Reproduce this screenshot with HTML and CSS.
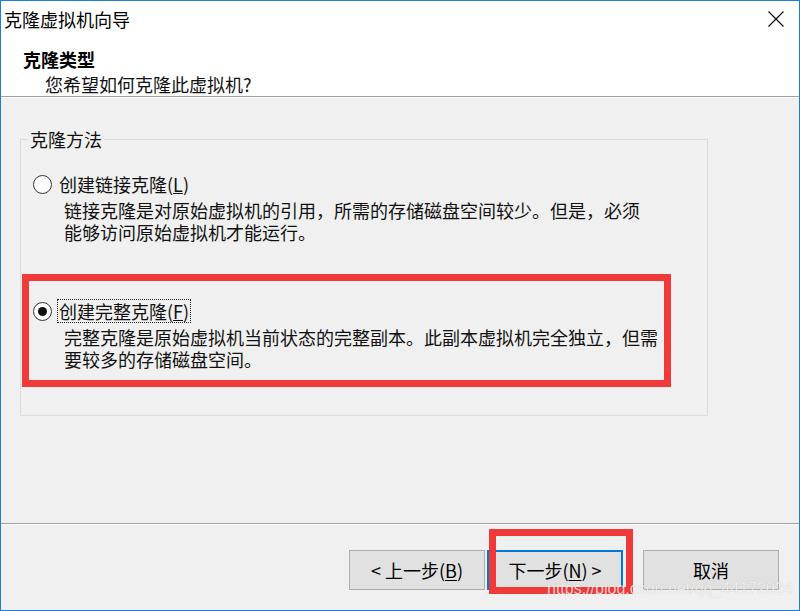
FILE: index.html
```html
<!DOCTYPE html>
<html lang="zh-CN">
<head>
  <meta charset="UTF-8">
  <title>克隆虚拟机向导</title>
  <link rel="stylesheet" href="styles.css">
</head>
<body>
  <div class="window">
    <div class="titlebar">
      <span class="title">克隆虚拟机向导</span>
      <svg class="close" width="16" height="16" viewBox="0 0 16 16">
        <path d="M0.5 0.5 L15.5 15.5 M15.5 0.5 L0.5 15.5" stroke="#000" stroke-width="1.1" fill="none"/>
      </svg>
    </div>

    <div class="header">
      <div class="header-title">克隆类型</div>
      <div class="header-sub">您希望如何克隆此虚拟机?</div>
    </div>

    <div class="content">
      <fieldset class="group">
        <legend>克隆方法</legend>

        <div class="option">
          <span class="radio"></span>
          <span class="label">创建链接克隆(<u>L</u>)</span>
          <div class="desc">链接克隆是对原始虚拟机的引用，所需的存储磁盘空间较少。但是，必须<br>能够访问原始虚拟机才能运行。</div>
        </div>

        <div class="option option-marked">
          <span class="radio checked"></span>
          <span class="label focused">创建完整克隆(<u>F</u>)</span>
          <div class="desc">完整克隆是原始虚拟机当前状态的完整副本。此副本虚拟机完全独立，但需<br>要较多的存储磁盘空间。</div>
          <span class="mark"></span>
        </div>
      </fieldset>
    </div>

    <div class="footer">
      <button class="btn">&lt; 上一步(<u>B</u>)</button>
      <div class="btn-wrap">
        <button class="btn primary">下一步(<u>N</u>) &gt;</button>
        <span class="mark mark-btn"></span>
      </div>
      <button class="btn cancel">取消</button>
    </div>

    <div class="watermark">https://blog.csdn.net/qq_44172024</div>
  </div>
</body>
</html>
```

FILE: styles.css
```css
* {
  margin: 0;
  padding: 0;
  box-sizing: border-box;
}

body {
  font-family: "Noto Sans CJK SC", "Noto Sans", sans-serif;
  font-size: 18px;
  color: #111;
  background: #fff;
}

.window {
  position: relative;
  width: 800px;
  height: 611px;
  border: 1px solid #1b7fd2;
  background: #f0f0f0;
  display: flex;
  flex-direction: column;
  overflow: hidden;
}

/* title bar */
.titlebar {
  height: 36px;
  background: #fff;
  display: flex;
  align-items: center;
  justify-content: space-between;
  padding: 0 15px 0 3px;
}

.title {
  font-size: 18px;
  line-height: 22px;
  color: #000;
}

.close {
  display: block;
}

/* wizard header */
.header {
  height: 60px;
  background: #fff;
  border-bottom: 1px solid #a0a0a0;
  padding: 10px 0 0 22px;
}

.header-title {
  font-weight: bold;
  line-height: 24px;
  color: #000;
}

.header-sub {
  margin-top: 3px;
  padding-left: 22px;
  line-height: 20px;
}

/* content */
.content {
  flex: 1;
  box-shadow: inset 0 1px 0 #fff;
}

.group {
  margin: 31px 0 0 19px;
  width: 688px;
  min-width: 0;
  border: 1px solid #dcdcdc;
  padding: 0 0 45px 0;
}

.group legend {
  margin-left: 7px;
  padding: 0 2px;
  line-height: 22px;
}

.option {
  display: grid;
  grid-template-columns: 19px auto;
  column-gap: 7px;
  align-items: center;
  padding-left: 12px;
  margin-top: 23px;
  line-height: 22px;
  white-space: nowrap;
}

.option-marked {
  position: relative;
  margin-top: 57px;
}

.radio {
  width: 19px;
  height: 19px;
  border: 1px solid #333;
  border-radius: 50%;
  background: #fff;
  display: flex;
  align-items: center;
  justify-content: center;
}

.radio.checked::after {
  content: "";
  width: 9px;
  height: 9px;
  border-radius: 50%;
  background: #111;
}

.label {
  justify-self: start;
}

.label.focused {
  outline: 1px dotted #222;
  outline-offset: 0;
  margin-left: -1px;
  padding: 0 1px;
}

.desc {
  grid-column: 2;
  margin: 4px 0 0 5px;
}

/* red annotation boxes */
.mark {
  position: absolute;
  border: 7px solid #f03a3a;
  pointer-events: none;
}

.option-marked .mark {
  top: -26px;
  bottom: -17px;
  left: 1px;
  right: 36px;
}

/* footer buttons */
.footer {
  height: 87px;
  border-top: 1px solid #a0a0a0;
  box-shadow: inset 0 1px 0 #fff;
  display: flex;
  justify-content: flex-end;
  align-items: flex-start;
  gap: 2px;
  padding: 26px 20px 0 0;
}

.btn {
  width: 136px;
  height: 40px;
  font-family: inherit;
  font-size: 18px;
  color: #000;
  background: #e1e1e1;
  border: 1px solid #adadad;
}

.btn u {
  text-underline-offset: 2px;
}

.btn.primary {
  border: 2px solid #0078d7;
}

.btn.cancel {
  margin-left: 18px;
}

.btn-wrap {
  position: relative;
}

.mark-btn {
  top: -21px;
  bottom: -4px;
  left: 2px;
  right: -10px;
}

.watermark {
  position: absolute;
  left: 546px;
  top: 578px;
  font-family: "Liberation Sans", Arial, sans-serif;
  font-size: 16px;
  line-height: 20px;
  color: rgba(255, 255, 255, 0.75);
  text-shadow: 0 0 1px rgba(0, 0, 0, 0.2);
}
```
